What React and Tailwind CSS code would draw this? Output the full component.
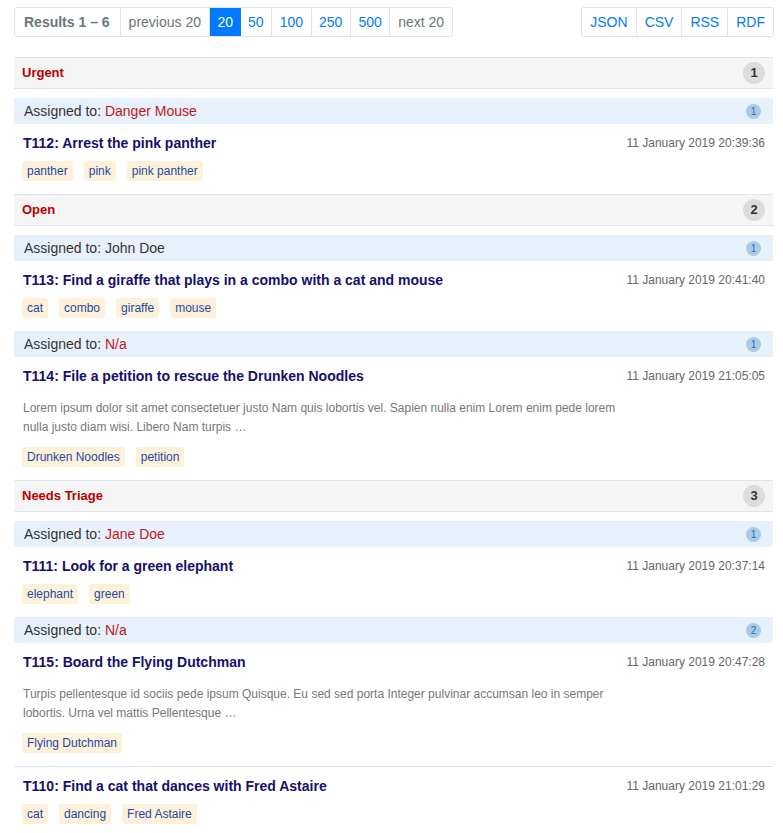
import React from "react";

const sections = [
  {
    name: "Urgent",
    count: 1,
    groups: [
      {
        who: "Danger Mouse",
        n: 1,
        tasks: [
          { title: "T112: Arrest the pink panther", date: "11 January 2019 20:39:36", tags: ["panther", "pink", "pink panther"] },
        ],
      },
    ],
  },
  {
    name: "Open",
    count: 2,
    groups: [
      {
        who: "John Doe",
        whoDark: true,
        n: 1,
        tasks: [
          { title: "T113: Find a giraffe that plays in a combo with a cat and mouse", date: "11 January 2019 20:41:40", tags: ["cat", "combo", "giraffe", "mouse"] },
        ],
      },
      {
        who: "N/a",
        n: 1,
        tasks: [
          {
            title: "T114: File a petition to rescue the Drunken Noodles",
            date: "11 January 2019 21:05:05",
            desc: "Lorem ipsum dolor sit amet consectetuer justo Nam quis lobortis vel. Sapien nulla enim Lorem enim pede lorem nulla justo diam wisi. Libero Nam turpis …",
            tags: ["Drunken Noodles", "petition"],
          },
        ],
      },
    ],
  },
  {
    name: "Needs Triage",
    count: 3,
    groups: [
      {
        who: "Jane Doe",
        n: 1,
        tasks: [
          { title: "T111: Look for a green elephant", date: "11 January 2019 20:37:14", tags: ["elephant", "green"] },
        ],
      },
      {
        who: "N/a",
        n: 2,
        tasks: [
          {
            title: "T115: Board the Flying Dutchman",
            date: "11 January 2019 20:47:28",
            desc: "Turpis pellentesque id sociis pede ipsum Quisque. Eu sed sed porta Integer pulvinar accumsan leo in semper lobortis. Urna vel mattis Pellentesque …",
            tags: ["Flying Dutchman"],
          },
          { title: "T110: Find a cat that dances with Fred Astaire", date: "11 January 2019 21:01:29", tags: ["cat", "dancing", "Fred Astaire"], sep: true },
        ],
      },
    ],
  },
];

function Task({ t }) {
  return (
    <div className={"pl-[9px] pr-2 pt-[10px] pb-[13px]" + (t.sep ? " border-t border-[#dbe6ee]" : "")}>
      <div className="flex items-center h-[18px]">
        <div className="flex-1 min-w-0 text-[14px] leading-[18px] font-bold text-[#14106b] whitespace-nowrap">{t.title}</div>
        <div className="shrink-0 ml-3 whitespace-nowrap text-[12px] leading-[18px] text-[#666]">{t.date}</div>
      </div>
      {t.desc && (
        <div className="w-[604px] mt-[14px] text-[12px] leading-[19px] text-[#777]">{t.desc}</div>
      )}
      <div className={"flex gap-[12px] " + (t.desc ? "mt-[10px]" : "mt-[9px]")}>
        {t.tags.map((g) => (
          <span key={g} className="-ml-[1px] h-[20px] px-[5px] rounded-[3px] bg-[#fdf1da] text-[#1f48a6] text-[12px] leading-[20px]">
            {g}
          </span>
        ))}
      </div>
    </div>
  );
}

export default function App() {
  const pageItem = "h-[28px] flex items-center border-l border-[#dee2e6] first:border-l-0";
  return (
    <div className="font-['Liberation_Sans',Arial,sans-serif] pl-[14px] pr-[10px] pt-[7px] pb-4 bg-white min-h-[833px]">
      <div className="flex justify-between text-[14px]">
        <div className="flex border border-[#dee2e6] rounded-[3px] overflow-hidden">
          <div className={pageItem + " font-bold text-[#6c757d] pl-[9px] pr-[10px]"}>Results 1 – 6</div>
          <div className={pageItem + " text-[#6c757d] px-2"}>previous 20</div>
          <div className={pageItem + " bg-[#007bff] text-white border-[#007bff] px-[7.5px]"}>20</div>
          <div className={pageItem + " text-[#007bff] border-l-0 px-[7.5px]"}>50</div>
          <div className={pageItem + " text-[#007bff] px-[7.5px]"}>100</div>
          <div className={pageItem + " text-[#007bff] px-[7.5px]"}>250</div>
          <div className={pageItem + " text-[#007bff] px-[7.5px]"}>500</div>
          <div className={pageItem + " text-[#6c757d] px-2"}>next 20</div>
        </div>
        <div className="flex border border-[#dee2e6] rounded-[3px] overflow-hidden mr-[-1px]">
          <div className={pageItem + " text-[#007bff] pl-[8px] pr-2"}>JSON</div>
          <div className={pageItem + " text-[#007bff] px-2"}>CSV</div>
          <div className={pageItem + " text-[#007bff] px-2"}>RSS</div>
          <div className={pageItem + " text-[#007bff] px-2"}>RDF</div>
        </div>
      </div>

      <div className="mt-[20px]">
        {sections.map((s) => (
          <div key={s.name}>
            <div className="h-[32px] flex items-center border-y border-[#dce5ee] bg-[#f5f5f5] pl-2 pr-2">
              <span className="text-[13px] font-bold text-[#b80000]">{s.name}</span>
              <span className="ml-auto w-[22px] h-[22px] rounded-full bg-[#dcdcdc] text-[#333] text-[13px] font-bold flex items-center justify-center">
                {s.count}
              </span>
            </div>
            <div className="h-[9px]" />
            {s.groups.map((g, i) => (
              <div key={i}>
                <div className="h-[26px] flex items-center bg-[#e7f1fc] pl-[10px] pr-[12px] text-[14px]">
                  <span className="text-[#333]">Assigned to:&nbsp;</span>
                  <span className={g.whoDark ? "text-[#333]" : "text-[#c4141c]"}>{g.who}</span>
                  <span className="ml-auto w-[15px] h-[15px] rounded-full bg-[#a9cbe7] text-[#2f6db5] text-[10px] flex items-center justify-center">
                    {g.n}
                  </span>
                </div>
                {g.tasks.map((t) => (
                  <Task key={t.title} t={t} />
                ))}
              </div>
            ))}
          </div>
        ))}
      </div>
    </div>
  );
}
